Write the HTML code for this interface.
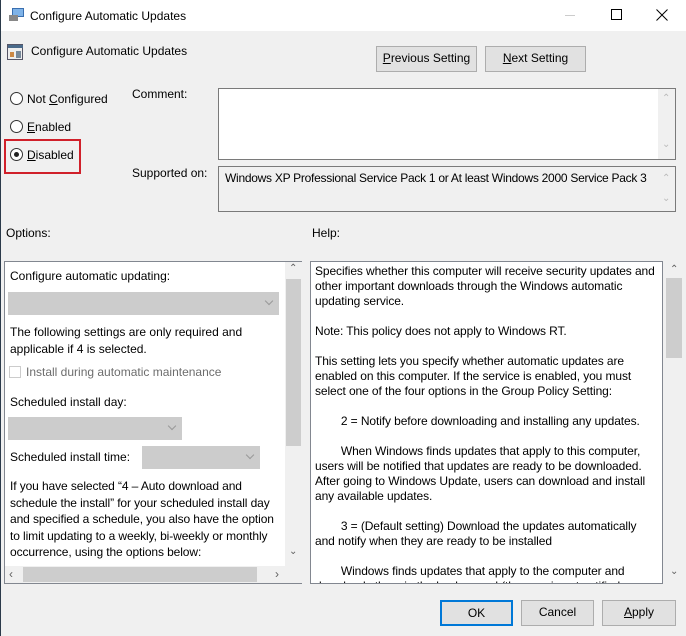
<!DOCTYPE html>
<html><head><style>
*{box-sizing:border-box;margin:0;padding:0}
body{width:686px;height:636px;overflow:hidden;background:#f0f0f0;font-family:"Liberation Sans",sans-serif;font-size:12px;color:#000;position:relative}
.a{position:absolute;white-space:nowrap}
.btn{position:absolute;background:#e1e1e1;border:1px solid #adadad;text-align:center;line-height:23px}
.box{position:absolute;background:#fff;border:1px solid #828790}
.rad{position:absolute;width:13px;height:13px;border:1px solid #333;border-radius:50%;background:#fff}
.dd{position:absolute;background:#ccc}
.dd:after{content:"";position:absolute;right:7px;top:6px;width:5px;height:5px;border-right:1px solid #999;border-bottom:1px solid #999;transform:rotate(45deg)}
.sb{position:absolute;background:#f0f0f0}
.th{position:absolute;background:#cdcdcd}
.ar{position:absolute;color:#606060;font-size:10px}
u{text-decoration:underline}
</style></head><body>
<div style="position:absolute;left:0;top:0;width:686px;height:31px;background:#fff"></div>
<div style="position:absolute;left:0;top:0;width:1px;height:636px;background:#2b3a4a"></div>
<svg class="a" style="left:8px;top:7px" width="18" height="16"><rect x="4" y="1" width="12" height="9" fill="#3a6fb0"/><rect x="5" y="2" width="10" height="7" fill="#7fb3e8"/><rect x="1" y="8" width="9" height="6" fill="#888"/></svg>
<div class="a" style="left:30px;top:9px">Configure Automatic Updates</div>
<div class="a" style="left:565px;top:15px;width:10px;height:1px;background:#ccc"></div>
<div class="a" style="left:611px;top:9px;width:11px;height:11px;border:1px solid #000"></div>
<svg class="a" style="left:656px;top:9px" width="12" height="12"><path d="M0.5 0.5L11.5 11.5M11.5 0.5L0.5 11.5" stroke="#000"/></svg>
<svg class="a" style="left:7px;top:44px" width="17" height="17"><rect x="0.5" y="0.5" width="15" height="15" fill="#eee" stroke="#556"/><rect x="1" y="1" width="15" height="3" fill="#4a6a8a"/><rect x="3" y="8" width="4" height="5" fill="#c84"/><rect x="9" y="7" width="5" height="7" fill="#789"/></svg>
<div class="a" style="left:31px;top:44px">Configure Automatic Updates</div>
<div class="btn" style="left:376px;top:46px;width:101px;height:26px"><u>P</u>revious Setting</div>
<div class="btn" style="left:485px;top:46px;width:101px;height:26px"><u>N</u>ext Setting</div>
<div class="rad" style="left:10px;top:92px"></div><div class="a" style="left:27px;top:92px">Not <u>C</u>onfigured</div>
<div class="rad" style="left:10px;top:120px"></div><div class="a" style="left:27px;top:120px"><u>E</u>nabled</div>
<div class="rad" style="left:10px;top:148px"><div style="position:absolute;left:3px;top:3px;width:5px;height:5px;border-radius:50%;background:#222"></div></div><div class="a" style="left:27px;top:148px"><u>D</u>isabled</div>
<div class="a" style="left:4px;top:139px;width:77px;height:35px;border:2px solid #d0202a"></div>
<div class="a" style="left:132px;top:87px">Comment:</div>
<div class="box" style="left:218px;top:88px;width:458px;height:72px;border-color:#7a7a7a"><div class="sb" style="right:0;top:0;width:17px;height:70px"></div><div class="ar" style="left:443px;top:4px;color:#bbb">&#8963;</div><div class="ar" style="left:443px;top:50px;color:#bbb">&#8964;</div></div>
<div class="a" style="left:132px;top:166px">Supported on:</div>
<div class="box" style="left:218px;top:166px;width:458px;height:46px;background:#f0f0f0;border-color:#7a7a7a"><div class="a" style="left:6px;top:4px;letter-spacing:-0.27px">Windows XP Professional Service Pack 1 or At least Windows 2000 Service Pack 3</div><div class="ar" style="left:443px;top:6px;color:#bbb">&#8963;</div><div class="ar" style="left:443px;top:26px;color:#bbb">&#8964;</div></div>
<div class="a" style="left:6px;top:226px">Options:</div>
<div class="a" style="left:312px;top:226px">Help:</div>
<div class="box" style="left:4px;top:261px;width:298px;height:323px">
<div class="a" style="left:5px;top:7px">Configure automatic updating:</div>
<div class="dd" style="left:3px;top:30px;width:271px;height:23px"></div>
<div class="a" style="left:5px;top:62px;line-height:17px">The following settings are only required and<br>applicable if 4 is selected.</div>
<div class="a" style="left:4px;top:104px;width:12px;height:12px;border:1px solid #ccc"></div>
<div class="a" style="left:21px;top:103px;color:#6d6d6d">Install during automatic maintenance</div>
<div class="a" style="left:5px;top:133px">Scheduled install day:</div>
<div class="dd" style="left:3px;top:155px;width:174px;height:23px"></div>
<div class="a" style="left:5px;top:188px">Scheduled install time:</div>
<div class="dd" style="left:137px;top:184px;width:118px;height:23px"></div>
<div class="a" style="left:5px;top:216px;line-height:16.5px;letter-spacing:-0.1px">If you have selected “4 – Auto download and<br>schedule the install” for your scheduled install day<br>and specified a schedule, you also have the option<br>to limit updating to a weekly, bi-weekly or monthly<br>occurrence, using the options below:</div>
<div class="sb" style="left:280px;top:0;width:17px;height:321px"></div>
<div class="th" style="left:281px;top:17px;width:15px;height:167px"></div>
<div class="ar" style="left:284px;top:1px">&#8963;</div><div class="ar" style="left:284px;top:284px">&#8964;</div>
<div class="sb" style="left:0;top:304px;width:280px;height:17px"></div>
<div class="th" style="left:18px;top:305px;width:234px;height:15px"></div>
<div class="ar" style="left:4px;top:305px;font-size:12px">&#8249;</div><div class="ar" style="left:270px;top:305px;font-size:12px">&#8250;</div>
</div>
<div class="box" style="left:310px;top:261px;width:353px;height:323px;overflow:hidden">
<div class="a" style="left:4px;top:2px;line-height:15px;white-space:pre;letter-spacing:-0.1px">Specifies whether this computer will receive security updates and
other important downloads through the Windows automatic
updating service.

Note: This policy does not apply to Windows RT.

This setting lets you specify whether automatic updates are
enabled on this computer. If the service is enabled, you must
select one of the four options in the Group Policy Setting:

        2 = Notify before downloading and installing any updates.

        When Windows finds updates that apply to this computer,
users will be notified that updates are ready to be downloaded.
After going to Windows Update, users can download and install
any available updates.

        3 = (Default setting) Download the updates automatically
and notify when they are ready to be installed

        Windows finds updates that apply to the computer and
downloads them in the background (the user is not notified</div>
</div>
<div class="sb" style="left:663px;top:261px;width:23px;height:323px"></div>
<div class="th" style="left:666px;top:278px;width:16px;height:80px"></div>
<div class="ar" style="left:670px;top:264px">&#8963;</div><div class="ar" style="left:670px;top:566px">&#8964;</div>
<div class="btn" style="left:440px;top:600px;width:73px;height:26px;border:2px solid #0078d7;line-height:22px">OK</div>
<div class="btn" style="left:521px;top:600px;width:73px;height:26px">Cancel</div>
<div class="btn" style="left:602px;top:600px;width:74px;height:26px"><u>A</u>pply</div>
</body></html>
